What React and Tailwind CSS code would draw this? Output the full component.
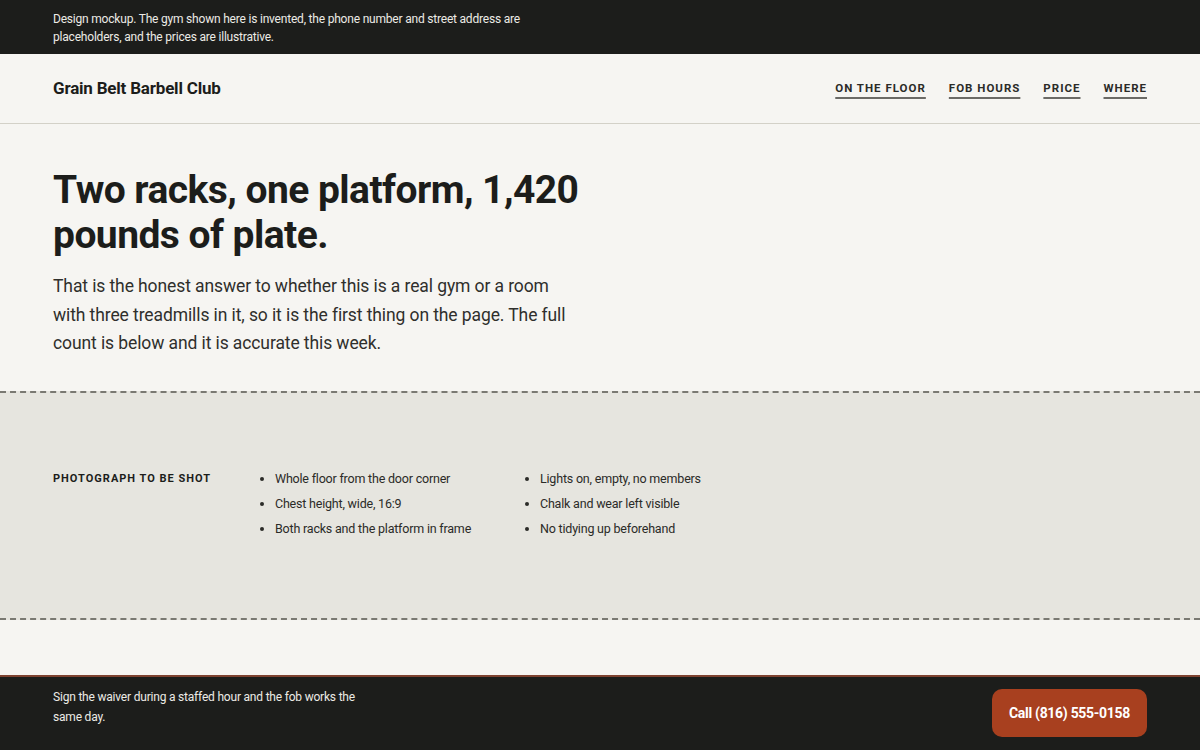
const NAV = ['On the floor', 'Fob hours', 'Price', 'Where'];

const SHOT_A = ['Whole floor from the door corner', 'Chest height, wide, 16:9', 'Both racks and the platform in frame'];
const SHOT_B = ['Lights on, empty, no members', 'Chalk and wear left visible', 'No tidying up beforehand'];

function ShotList({ items }) {
  return (
    <ul className="flex flex-col gap-[7px] pl-[12px]">
      {items.map(item => (
        <li key={item} className="flex items-center gap-[11px] text-[12.5px] leading-[18px] text-[#2b2b28] tracking-[-0.2px]">
          <span className="w-[4px] h-[4px] rounded-full bg-[#2b2b28] flex-shrink-0" />
          {item}
        </li>
      ))}
    </ul>
  );
}

export default function App() {
  return (
    <div className="min-h-[750px] flex flex-col bg-[#f6f5f2] text-[#1c1d1b] font-['Roboto',sans-serif]">
      {/* Disclaimer strip */}
      <div className="h-[54px] bg-[#1c1d1b] px-[53px] pt-[10px] text-[12px] leading-[18px] text-[#ecebe6] tracking-[-0.2px]">
        <p className="w-[490px]">
          Design mockup. The gym shown here is invented, the phone number and street address are placeholders, and the prices are illustrative.
        </p>
      </div>

      {/* Header */}
      <header className="h-[70px] flex items-center justify-between px-[53px] border-b border-[#d3d1c8]">
        <span className="text-[17px] font-bold tracking-[-0.2px]">Grain Belt Barbell Club</span>
        <nav className="flex items-center gap-[23px]">
          {NAV.map(n => (
            <a key={n} href="#" className="text-[11.5px] font-bold uppercase tracking-[1px] text-[#2b2b28] underline decoration-2 decoration-[#6b6a66] underline-offset-[5px]">
              {n}
            </a>
          ))}
        </nav>
      </header>

      {/* Hero */}
      <section className="px-[53px] pt-[44px] pb-[33px]">
        <h1 className="w-[580px] text-[39px] leading-[45px] font-bold tracking-[-0.55px]">
          Two racks, one platform, 1,420 pounds of plate.
        </h1>
        <p className="mt-[14px] w-[560px] text-[17.5px] leading-[28.5px] text-[#2f2f2c] tracking-[-0.1px]">
          That is the honest answer to whether this is a real gym or a room<br />
          with three treadmills in it, so it is the first thing on the page. The full<br />
          count is below and it is accurate this week.
        </p>
      </section>

      {/* Photo placeholder */}
      <section className="h-[229px] bg-[#e6e5df] border-y-2 border-dashed border-[#7a7972] px-[53px] flex items-center">
        <div className="grid grid-cols-[195px_265px_265px] items-start mt-[-2px]">
          <span className="text-[11px] leading-[18px] font-bold uppercase tracking-[1px] text-[#1c1d1b]">Photograph to be shot</span>
          <ShotList items={SHOT_A} />
          <ShotList items={SHOT_B} />
        </div>
      </section>

      <div className="flex-1" />

      {/* Footer bar */}
      <footer className="h-[75px] bg-[#1c1d1b] border-t-2 border-[#7e4230] px-[53px] flex items-start justify-between pt-[10px]">
        <p className="w-[320px] text-[12px] leading-[20px] text-[#ecebe6] tracking-[-0.2px]">
          Sign the waiver during a staffed hour and the fob works the same day.
        </p>
        <a href="#" className="mt-[2px] h-[48px] w-[155px] flex items-center justify-center rounded-[10px] bg-[#a8401f] text-white text-[14px] font-bold tracking-[-0.3px]">
          Call (816) 555-0158
        </a>
      </footer>
    </div>
  );
}
